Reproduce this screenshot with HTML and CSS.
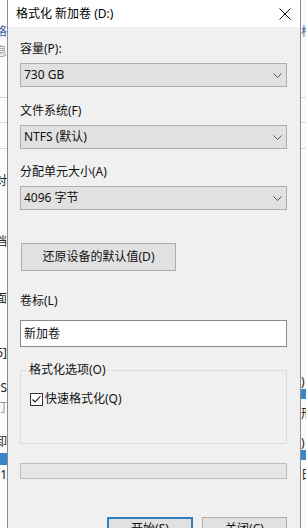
FILE: index.html
```html
<!DOCTYPE html>
<html lang="zh-CN">
<head>
  <meta charset="UTF-8">
  <meta name="viewport" content="width=device-width, initial-scale=1.0">
  <title>格式化 新加卷 (D:)</title>
  <link rel="stylesheet" href="styles.css">
</head>
<body>
  <div class="screen">
    <div class="side side-left">
      <div class="frag link l-1">性格</div>
      <div class="frag dim l-2">信息</div>
      <div class="rule l-3"></div>
      <div class="rule l-4"></div>
      <div class="rule l-5"></div>
      <div class="frag l-6">对</div>
      <div class="frag l-7">档</div>
      <div class="frag l-8">面</div>
      <div class="frag l-9">5]</div>
      <div class="frag l-10">S</div>
      <div class="frag dim l-11">打</div>
      <div class="frag l-12">卸</div>
      <div class="band l-13"></div>
      <div class="frag l-14">1</div>
    </div>

    <div class="dialog">
      <div class="titlebar">
        <span class="title">格式化 新加卷 (D:)</span>
        <svg class="close" width="12" height="12" viewBox="0 0 12 12">
          <path d="M0.5 0.5 L11.5 11.5 M11.5 0.5 L0.5 11.5" stroke="#111" stroke-width="1" fill="none"/>
        </svg>
      </div>

      <div class="content">
        <div class="field-label">容量(P):</div>
        <div class="select">
          <span>730 GB</span>
          <svg class="chev" width="9" height="5" viewBox="0 0 9 5"><path d="M0.5 0.5 L4.5 4.5 L8.5 0.5" stroke="#555" fill="none"/></svg>
        </div>

        <div class="field-label gap-lg">文件系统(F)</div>
        <div class="select">
          <span>NTFS (默认)</span>
          <svg class="chev" width="9" height="5" viewBox="0 0 9 5"><path d="M0.5 0.5 L4.5 4.5 L8.5 0.5" stroke="#555" fill="none"/></svg>
        </div>

        <div class="field-label gap-md">分配单元大小(A)</div>
        <div class="select">
          <span>4096 字节</span>
          <svg class="chev" width="9" height="5" viewBox="0 0 9 5"><path d="M0.5 0.5 L4.5 4.5 L8.5 0.5" stroke="#555" fill="none"/></svg>
        </div>

        <button class="btn btn-restore">还原设备的默认值(D)</button>

        <div class="field-label label-volume">卷标(L)</div>
        <div class="textbox">新加卷</div>

        <fieldset class="group">
          <legend>格式化选项(O)</legend>
          <div class="check-row">
            <span class="checkbox">
              <svg width="11" height="11" viewBox="0 0 11 11"><path d="M1.5 5.5 L4 8 L9.5 2" stroke="#111" stroke-width="1.1" fill="none"/></svg>
            </span>
            <span>快速格式化(Q)</span>
          </div>
        </fieldset>

        <div class="progress"></div>

        <div class="actions">
          <button class="btn btn-action btn-default">开始(S)</button>
          <button class="btn btn-action">关闭(C)</button>
        </div>
      </div>
    </div>

    <div class="side side-right">
      <div class="frag link r-1">格式</div>
      <div class="rule r-2"></div>
      <div class="rule r-3"></div>
      <div class="rule r-4"></div>
      <div class="frag r-5">)</div>
      <div class="band r-6"></div>
      <div class="frag r-7">形</div>
      <div class="frag r-8">)</div>
      <div class="band r-9"></div>
      <div class="frag r-10">日</div>
    </div>
  </div>
</body>
</html>
```

FILE: styles.css
```css
body {
  margin: 0;
  background: #fff;
  color: #111;
  font-family: "Noto Sans", "Noto Sans CJK SC", sans-serif;
  font-size: 12px;
  overflow: hidden;
}

.screen {
  display: flex;
  height: 528px;
  overflow: hidden;
}

/* background window strips */
.side {
  display: flex;
  flex-direction: column;
  overflow: hidden;
  background: #fbfbfb;
}

.side-left {
  width: 7px;
  align-items: flex-end;
}

.side-right {
  width: 5px;
  align-items: flex-start;
}

.frag {
  height: 12px;
  line-height: 12px;
  white-space: nowrap;
  color: #222;
}

.frag.link {
  color: #3b5ca8;
}

.frag.dim {
  color: #999;
}

.rule {
  width: 100%;
  height: 1px;
  background: #d6d6d6;
  flex: none;
}

.band {
  width: 100%;
  background: #3a86c6;
  flex: none;
}

.l-1 { margin-top: 26px; }
.l-2 { margin-top: 8px; }
.l-3 { margin-top: 39px; }
.l-4 { margin-top: 24px; }
.l-5 { margin-top: 25px; }
.l-6 { margin-top: 26px; }
.l-7 { margin-top: 49px; }
.l-8 { margin-top: 45px; }
.l-9 { margin-top: 42px; }
.l-10 { margin-top: 23px; }
.l-11 { margin-top: 8px; }
.l-12 { margin-top: 22px; }
.l-13 { margin-top: 5px; height: 12px; }
.l-14 { margin-top: 4px; }

.r-1 { margin-top: 26px; }
.r-2 { margin-top: 59px; }
.r-3 { margin-top: 24px; }
.r-4 { margin-top: 25px; }
.r-5 { margin-top: 227px; }
.r-6 { margin-top: 1px; height: 10px; }
.r-7 { margin-top: 9px; }
.r-8 { margin-top: 17px; }
.r-9 { margin-top: 1px; height: 10px; }
.r-10 { margin-top: 9px; }

/* dialog */
.dialog {
  width: 294px;
  flex: none;
  box-sizing: border-box;
  border-left: 1px solid #8c8c8c;
  border-right: 1px solid #8c8c8c;
  background: #f0f0f0;
}

.titlebar {
  height: 27px;
  background: #fff;
  display: flex;
  align-items: center;
  justify-content: space-between;
  padding: 0 9px 0 8px;
}

.title {
  line-height: 16px;
  color: #000;
}

.close {
  display: block;
}

.content {
  padding: 14px 13px 0 12px;
  display: flex;
  flex-direction: column;
}

.field-label {
  line-height: 16px;
  height: 16px;
}

.gap-lg {
  margin-top: 16px;
}

.gap-md {
  margin-top: 15px;
}

.select {
  margin-top: 6px;
  height: 24px;
  box-sizing: border-box;
  border: 1px solid #adadad;
  background: #e1e1e1;
  display: flex;
  align-items: center;
  justify-content: space-between;
  padding: 0 4px 0 3px;
  line-height: 16px;
}

.chev {
  display: block;
}

.btn {
  font-family: inherit;
  font-size: 12px;
  color: #111;
  background: #e1e1e1;
  border: 1px solid #adadad;
  box-sizing: border-box;
  padding: 0;
  line-height: 16px;
}

.btn-restore {
  margin-top: 33px;
  margin-left: 1px;
  width: 155px;
  height: 28px;
}

.label-volume {
  margin-top: 22px;
}

.textbox {
  margin-top: 11px;
  height: 27px;
  box-sizing: border-box;
  border: 1px solid #8a8a8a;
  background: #fff;
  padding: 0 3px;
  display: flex;
  align-items: center;
  line-height: 16px;
}

.group {
  margin: 15px 0 0;
  padding: 13px 6px 0;
  border: 1px solid #dcdcdc;
  height: 82px;
  box-sizing: border-box;
  min-width: 0;
}

.group legend {
  padding: 0 2px;
  line-height: 16px;
}

.check-row {
  display: flex;
  align-items: center;
  gap: 2px;
  line-height: 16px;
  margin-left: 3px;
}

.checkbox {
  width: 13px;
  height: 13px;
  box-sizing: border-box;
  border: 1px solid #333;
  background: #fff;
  display: flex;
  align-items: center;
  justify-content: center;
}

.progress {
  margin-top: 19px;
  height: 16px;
  box-sizing: border-box;
  border: 1px solid #bcbcbc;
  background: #e6e6e6;
}

.actions {
  margin-top: 38px;
  display: flex;
  justify-content: flex-end;
  gap: 9px;
}

.btn-action {
  width: 85px;
  height: 23px;
}

.btn-default {
  width: 86px;
  border: 2px solid #2f7fc1;
}
```
